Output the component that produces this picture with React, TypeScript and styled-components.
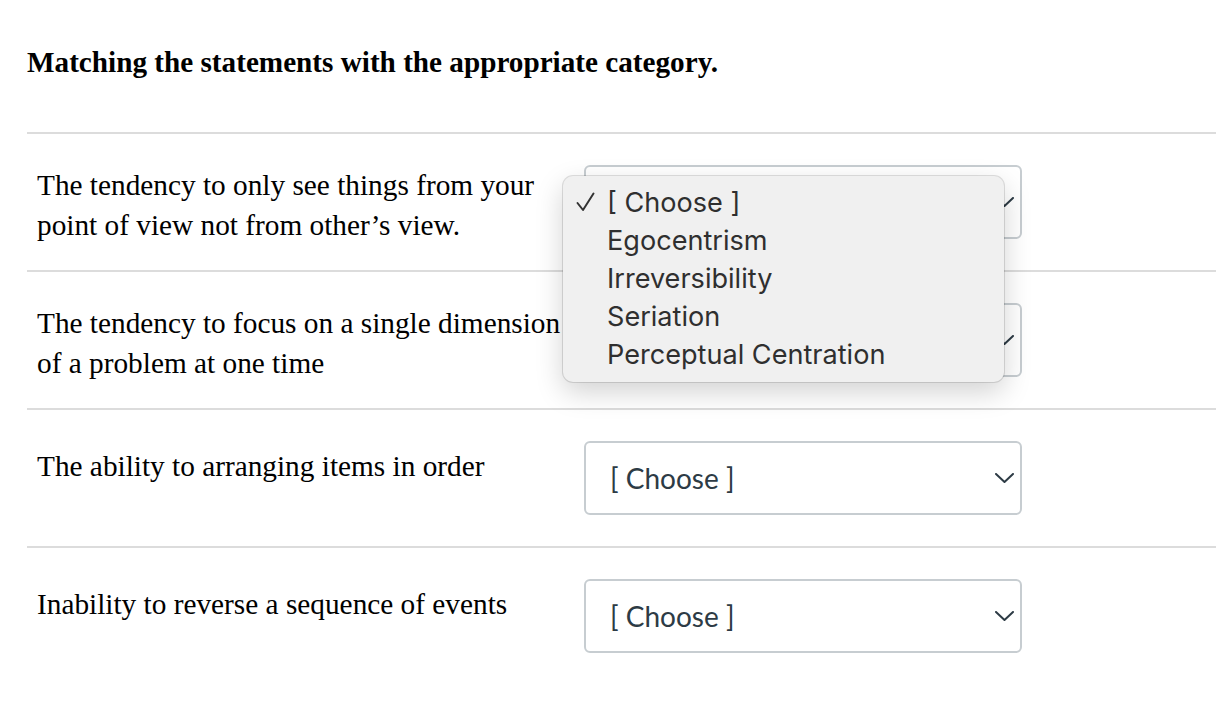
import React from 'react';
import styled, { createGlobalStyle } from 'styled-components';

const GlobalStyle = createGlobalStyle`
  html, body {
    margin: 0;
    padding: 0;
    background: #ffffff;
  }
  body {
    font-family: "Liberation Serif", "Times New Roman", serif;
    color: #000000;
  }
`;

const Page = styled.div`
  padding: 46px 0 0 27px;
  min-height: 100vh;
  box-sizing: border-box;
  overflow: hidden;
`;

const Heading = styled.h2`
  margin: 0 0 54px;
  font-size: 29.2px;
  line-height: 32px;
  font-weight: 700;
`;

const Row = styled.div`
  display: flex;
  align-items: center;
  height: 136px;
  padding-left: 10px;
  border-top: 2px solid #dcdcdc;
`;

const Statement = styled.div<{ $offset: number }>`
  align-self: flex-start;
  width: 534px;
  margin-right: 13px;
  padding-top: ${({ $offset }) => $offset}px;
  font-size: 29.3px;
  line-height: 40px;
`;

const SelectWrap = styled.div`
  position: relative;
`;

const SelectBox = styled.div`
  display: flex;
  align-items: center;
  justify-content: space-between;
  box-sizing: border-box;
  width: 438px;
  height: 74px;
  padding: 0 6px 0 24px;
  border: 2px solid #c7cdd1;
  border-radius: 6px;
  background: #ffffff;
  font-family: Lato, "Open Sans", sans-serif;
  font-size: 28px;
  color: #2d3b45;
`;

const Menu = styled.ul`
  position: absolute;
  top: 11px;
  left: -21px;
  z-index: 2;
  width: 441px;
  box-sizing: border-box;
  margin: 0;
  padding: 7px 0 9px;
  list-style: none;
  background: #f0f0f0;
  border-radius: 10px;
  box-shadow: 0 0 0 1px rgba(0, 0, 0, 0.12), 0 10px 28px rgba(0, 0, 0, 0.18);
  font-family: Inter, "Noto Sans", sans-serif;
  font-size: 27.1px;
  color: #2f2f2f;
`;

const MenuItem = styled.li`
  display: flex;
  align-items: center;
  height: 38px;
  padding-left: 13px;
`;

const CheckSlot = styled.span`
  display: inline-flex;
  width: 31px;
`;

const Chevron = () => (
  <svg width="19" height="10" viewBox="0 0 19 10" fill="none">
    <polyline points="1,1 9.5,9 18,1" stroke="#2d3b45" strokeWidth="2" strokeLinecap="round" strokeLinejoin="round" />
  </svg>
);

const Check = () => (
  <svg width="19" height="20" viewBox="0 0 19 20" fill="none">
    <polyline points="1.5,11 7,18 17.5,1.5" stroke="#333333" strokeWidth="2" strokeLinecap="round" strokeLinejoin="round" />
  </svg>
);

const options = ['[ Choose ]', 'Egocentrism', 'Irreversibility', 'Seriation', 'Perceptual Centration'];

const rows = [
  { text: 'The tendency to only see things from your point of view not from other\u2019s view.', offset: 31, open: true },
  { text: 'The tendency to focus on a single dimension of a problem at one time', offset: 31, open: false },
  { text: 'The ability to arranging items in order', offset: 36, open: false },
  { text: 'Inability to reverse a sequence of events', offset: 36, open: false },
];

const App: React.FC = () => (
  <>
    <GlobalStyle />
    <Page>
      <Heading>Matching the statements with the appropriate category.</Heading>
      {rows.map((row) => (
        <Row key={row.text}>
          <Statement $offset={row.offset}>{row.text}</Statement>
          <SelectWrap>
            <SelectBox>
              <span>[ Choose ]</span>
              <Chevron />
            </SelectBox>
            {row.open && (
              <Menu>
                {options.map((opt, i) => (
                  <MenuItem key={opt}>
                    <CheckSlot>{i === 0 && <Check />}</CheckSlot>
                    {opt}
                  </MenuItem>
                ))}
              </Menu>
            )}
          </SelectWrap>
        </Row>
      ))}
    </Page>
  </>
);

export default App;
